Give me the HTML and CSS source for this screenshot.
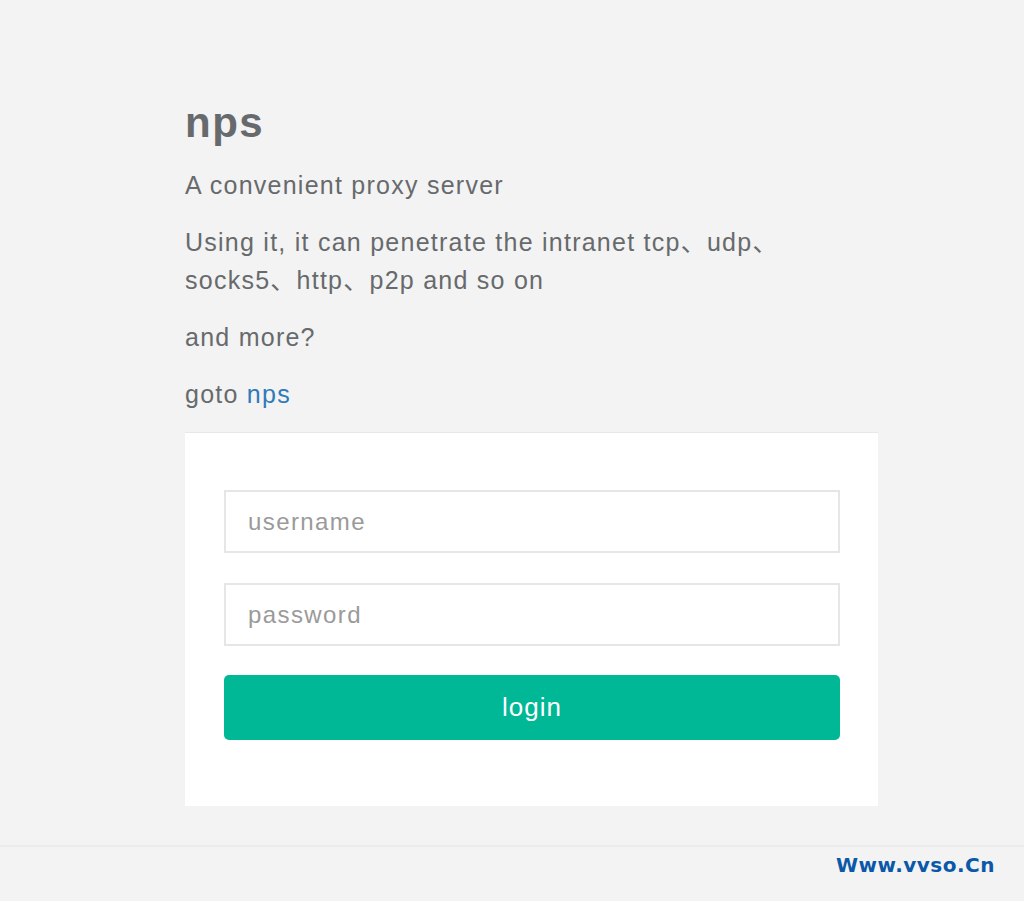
FILE: index.html
```html
<!DOCTYPE html>
<html lang="en">
<head>
<meta charset="utf-8">
<title>nps</title>
<link rel="stylesheet" href="styles.css">
</head>
<body>
<div class="login-columns">
  <h1 class="title">nps</h1>
  <p>A convenient proxy server</p>
  <p>Using it, it can penetrate the intranet tcp、udp、socks5、http、p2p and so on</p>
  <p>and more?</p>
  <p>goto <a href="#" class="link">nps</a></p>
  <div class="ibox">
    <form class="form">
      <input class="field" type="text" placeholder="username">
      <input class="field" type="password" placeholder="password">
      <button class="btn" type="button">login</button>
    </form>
  </div>
</div>
<footer class="footer">
  <span class="watermark">Www.vvso.Cn</span>
</footer>
</body>
</html>
```

FILE: styles.css
```css
html, body {
  margin: 0;
  padding: 0;
}
body {
  background: #f3f3f3;
  color: #676a6c;
  font-family: "Liberation Sans", "Noto Sans CJK SC", Arial, sans-serif;
  font-size: 25px;
  letter-spacing: 1.25px;
  height: 901px;
  overflow: hidden;
}
.login-columns {
  width: 693px;
  margin-left: 185px;
  padding-top: 99px;
}
.title {
  margin: 0 0 19px;
  font-size: 42px;
  line-height: 48px;
  font-weight: bold;
  letter-spacing: 1.5px;
  color: #676a6c;
}
p {
  margin: 0 0 19px;
  line-height: 38px;
}
.cjk {
  letter-spacing: 3px;
}
.link {
  color: #2f7ab8;
  text-decoration: none;
}
.ibox {
  background: #fff;
  border-top: 1px solid #e4e9ee;
  padding: 57px 38px 66px 39px;
}
.form {
  display: flex;
  flex-direction: column;
}
.field {
  box-sizing: border-box;
  height: 63px;
  border: 2px solid #e6e6e6;
  background: #fff;
  padding: 0 22px;
  font-family: inherit;
  font-size: 24px;
  letter-spacing: 1.4px;
  color: #676a6c;
  outline: none;
  margin-bottom: 30px;
}
.field:nth-child(2) {
  margin-bottom: 29px;
}
.field::placeholder {
  color: #9a9a9a;
}
.btn {
  height: 65px;
  border: none;
  border-radius: 5px;
  background: #00b796;
  color: #fff;
  font-family: inherit;
  font-size: 26px;
  letter-spacing: 1px;
  cursor: pointer;
}
.footer {
  margin-top: 39px;
  border-top: 2px solid #ebebeb;
  display: flex;
  justify-content: flex-end;
  padding: 6px 29px 0 0;
}
.watermark {
  font-family: "DejaVu Sans", sans-serif;
  font-weight: bold;
  font-size: 20px;
  color: #0b58a8;
  letter-spacing: 0.5px;
}
```
